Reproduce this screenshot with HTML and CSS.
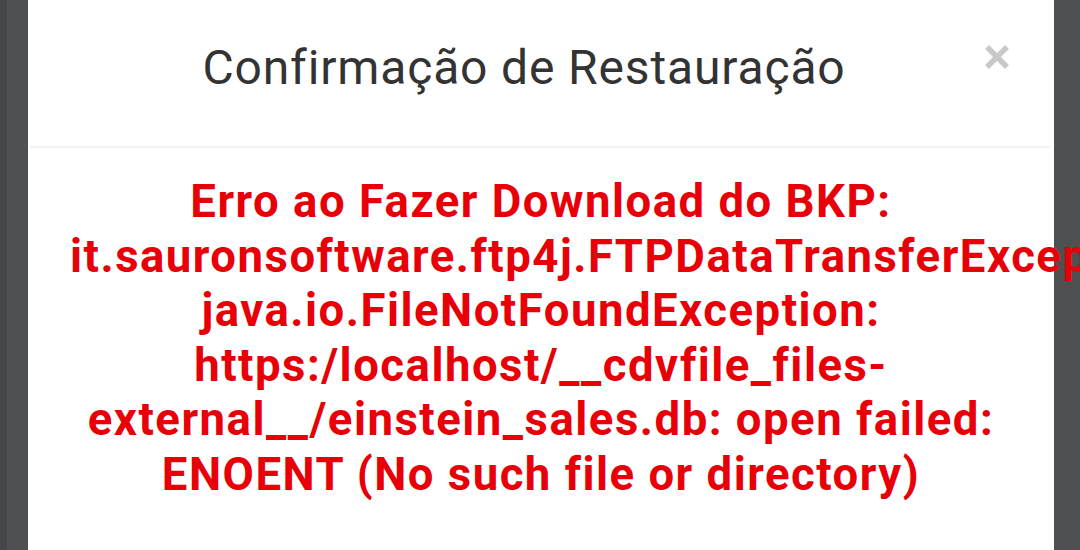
FILE: index.html
```html
<!DOCTYPE html>
<html lang="pt">
<head>
<meta charset="utf-8">
<title>Confirmação de Restauração</title>
<link rel="stylesheet" href="styles.css">
</head>
<body>
  <div class="backdrop">
    <div class="modal">
      <div class="modal-header">
        <h4 class="modal-title">Confirmação de Restauração</h4>
        <button class="close" aria-label="Fechar">
          <svg width="26" height="26" viewBox="0 0 26 26"><path d="M3 3 L23 23 M23 3 L3 23" stroke="#c9c9c9" stroke-width="5.5" stroke-linecap="butt"/></svg>
        </button>
      </div>
      <div class="modal-body">
        <p class="error">Erro ao Fazer Download do BKP: it.sauronsoftware.ftp4j.FTPDataTransferException: java.io.FileNotFoundException: https:/localhost/__cdvfile_files-external__/einstein_sales.db: open failed: ENOENT (No such file or directory)</p>
      </div>
    </div>
  </div>
</body>
</html>
```
FILE: styles.css
```css
html, body {
  margin: 0;
  padding: 0;
  height: 100%;
  overflow: hidden;
}
body {
  background: #4f5052;
  font-family: Roboto, "Liberation Sans", Arial, sans-serif;
}
.backdrop {
  height: 100%;
  border-left: 7px solid #46474a;
  padding-left: 21px;
  box-sizing: border-box;
  overflow: hidden;
}
.modal {
  width: 1026px;
  height: 100%;
  background: #ffffff;
}
.modal-header {
  position: relative;
  height: 148px;
  box-sizing: border-box;
  padding: 40px 0 0 0;
  margin: 0 4px 0 2px;
  border-bottom: 2px solid #f1f1f1;
  text-align: center;
}
.modal-title {
  margin: 0;
  padding-right: 32px;
  font-size: 48px;
  font-weight: 400;
  letter-spacing: 0.85px;
  color: #333333;
  line-height: 56px;
}
.close {
  position: absolute;
  top: 44px;
  right: 40px;
  padding: 0;
  border: 0;
  background: none;
  line-height: 0;
}
.modal-body {
  padding: 27px 42px 0 42px;
}
.error {
  margin: 0;
  text-align: center;
  color: #e80008;
  font-size: 45.5px;
  font-weight: 700;
  letter-spacing: 1.5px;
  line-height: 54.6px;
}
```
